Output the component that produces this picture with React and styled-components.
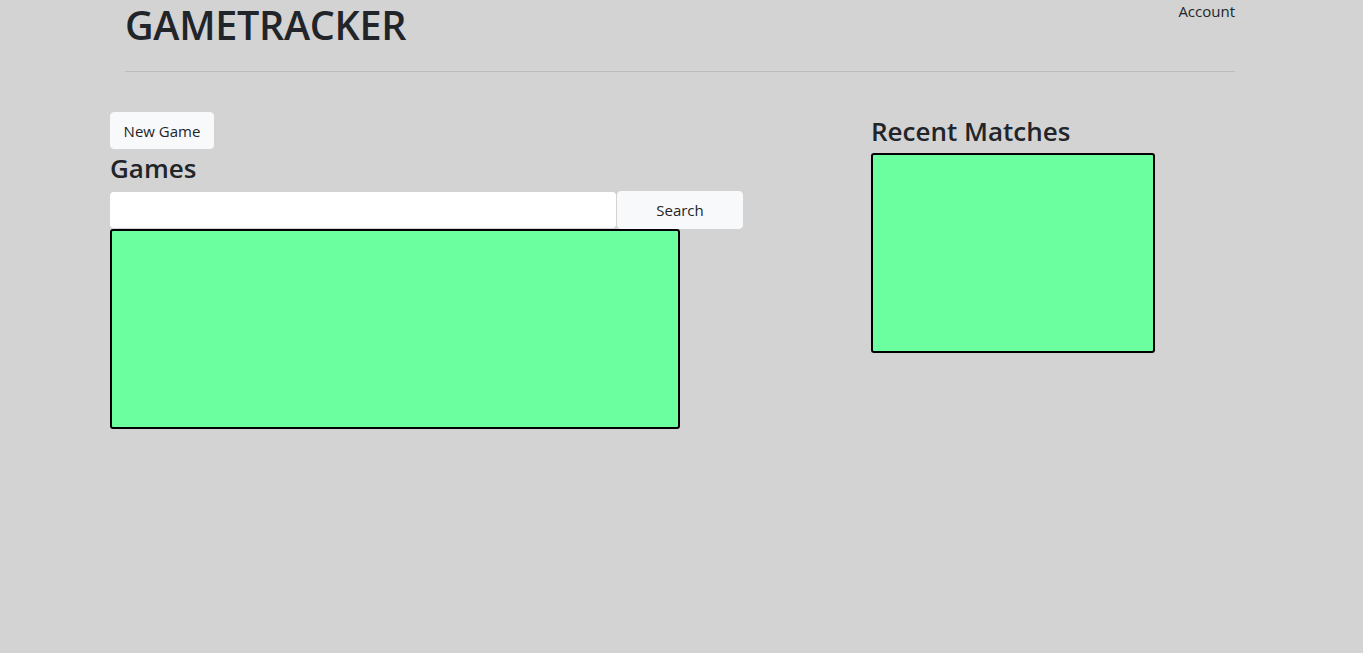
import React from 'react'
import styled, { createGlobalStyle } from 'styled-components'

const GlobalStyle = createGlobalStyle`
  html, body {
    margin: 0;
    padding: 0;
    background: #d3d3d3;
    font-family: "Open Sans", "Noto Sans", sans-serif;
    color: #212529;
  }
`

const Page = styled.div`
  min-height: 653px;
  background: #d3d3d3;
`

const Header = styled.header`
  width: 1110px;
  margin: 0 0 0 125px;
  height: 71px;
  border-bottom: 1px solid #bcbcbc;
  display: flex;
  justify-content: space-between;
  align-items: flex-start;
`

const Brand = styled.h1`
  margin: 0;
  font-size: 39.5px;
  font-weight: 600;
  line-height: 50px;
  letter-spacing: -0.3px;
`

const NavLink = styled.a`
  font-size: 15px;
  line-height: 23px;
  color: #212529;
  text-decoration: none;
`

const Main = styled.main`
  display: grid;
  grid-template-columns: 761px 300px;
  padding: 40px 0 0 110px;
`

const Column = styled.section`
  display: flex;
  flex-direction: column;
  align-items: flex-start;
`

const Button = styled.button`
  font-family: inherit;
  font-size: 15px;
  color: #212529;
  background: #f8f9fa;
  border: 1px solid #f8f9fa;
  border-radius: 4px;
  height: ${(p) => p.h || 37}px;
  width: ${(p) => p.w}px;
  padding: 0;
  cursor: pointer;
`

const Heading = styled.h3`
  margin: ${(p) => p.m || '0'};
  font-size: 26px;
  font-weight: 600;
  line-height: 38px;
`

const SearchRow = styled.form`
  display: flex;
  align-items: center;
`

const Input = styled.input`
  width: 506px;
  height: 36px;
  box-sizing: border-box;
  border: none;
  border-radius: 4px;
  background: #fff;
  margin-right: 1px;
`

const GreenBox = styled.div`
  box-sizing: border-box;
  width: ${(p) => p.w}px;
  height: ${(p) => p.h}px;
  background: #6bffa0;
  border: 2px solid #000;
  border-radius: 3px;
`

export default function App() {
  return (
    <Page>
      <GlobalStyle />
      <Header>
        <Brand>GAMETRACKER</Brand>
        <NavLink href="#">Account</NavLink>
      </Header>
      <Main>
        <Column>
          <Button w={104}>New Game</Button>
          <Heading m="0 0 4px">Games</Heading>
          <SearchRow onSubmit={(e) => e.preventDefault()}>
            <Input type="text" />
            <Button w={126} h={38}>Search</Button>
          </SearchRow>
          <GreenBox w={570} h={200} />
        </Column>
        <Column>
          <Heading m="0 0 3px">Recent Matches</Heading>
          <GreenBox w={284} h={200} />
        </Column>
      </Main>
    </Page>
  )
}
